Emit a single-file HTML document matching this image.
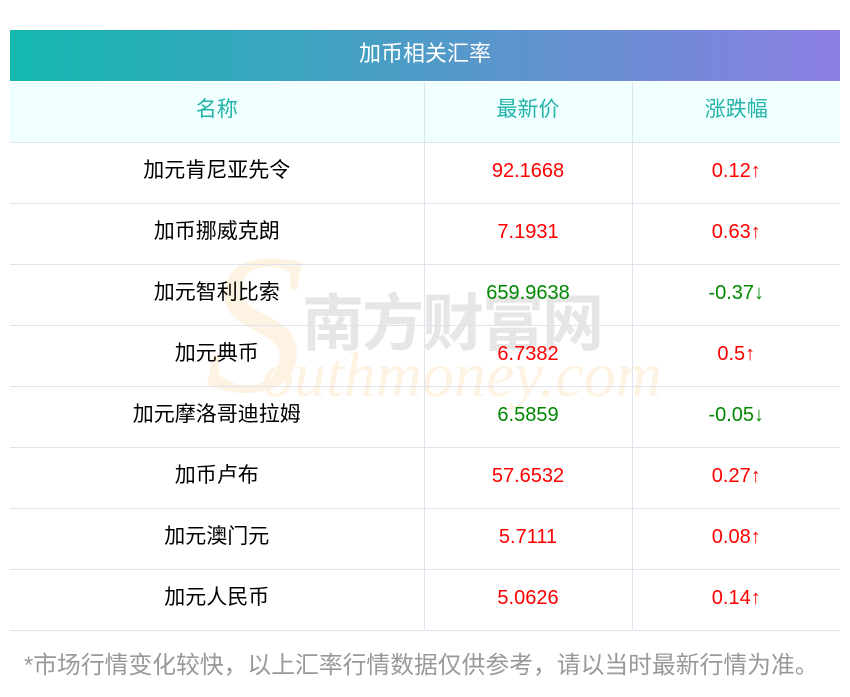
<!DOCTYPE html>
<html><head><meta charset="utf-8"><style>
body{margin:0;background:#fff;width:850px;height:697px;position:relative;overflow:hidden;font-family:"Liberation Sans","Noto Sans CJK SC",sans-serif}
.hd{position:absolute;left:10px;top:30px;width:830px;height:51px;background:linear-gradient(90deg,#13b8ae,#8c7ee2);color:#fff;font-size:22px;line-height:48px;text-align:center}
table{position:absolute;left:10px;top:82px;width:830px;border-collapse:collapse;table-layout:fixed}
td{border:1px solid #dfe3ee;height:52px;text-align:center;font-size:20px;padding:2px 0 6px 0}
td.c{font-size:21px;padding:0 0 8px 0}
tr td:first-child{border-left:none}tr td:last-child{border-right:none}
tr:first-child td{border-top:none;background:#f0ffff;color:#22b5a8;font-size:21px;padding:0 0 8px 0}
.r{color:#f00}.g{color:#080}
.foot{position:absolute;left:24px;top:651px;font-size:23.8px;color:#999;white-space:nowrap;line-height:30px}
.wm{position:absolute;pointer-events:none}
</style></head><body>
<div class="hd">加币相关汇率</div>
<div class="wm" style="left:205px;top:225px;font-family:'Liberation Serif',serif;font-style:italic;font-size:200px;color:#fef3e2;line-height:200px">S</div>
<div class="wm" style="left:302px;top:290px;font-size:62px;color:#e6e6e6;letter-spacing:-2px;font-weight:bold;line-height:70px">南方财富网</div>
<div class="wm" style="left:262px;top:340px;font-family:'Liberation Serif',serif;font-style:italic;font-size:64px;color:#fef3e2;line-height:70px">outhmoney.com</div>
<table>
<colgroup><col style="width:414px"><col style="width:208px"><col style="width:208px"></colgroup>
<tr><td>名称</td><td>最新价</td><td>涨跌幅</td></tr>
<tr><td class="c">加元肯尼亚先令</td><td class="r">92.1668</td><td class="r">0.12↑</td></tr>
<tr><td class="c">加币挪威克朗</td><td class="r">7.1931</td><td class="r">0.63↑</td></tr>
<tr><td class="c">加元智利比索</td><td class="g">659.9638</td><td class="g">-0.37↓</td></tr>
<tr><td class="c">加元典币</td><td class="r">6.7382</td><td class="r">0.5↑</td></tr>
<tr><td class="c">加元摩洛哥迪拉姆</td><td class="g">6.5859</td><td class="g">-0.05↓</td></tr>
<tr><td class="c">加币卢布</td><td class="r">57.6532</td><td class="r">0.27↑</td></tr>
<tr><td class="c">加元澳门元</td><td class="r">5.7111</td><td class="r">0.08↑</td></tr>
<tr><td class="c">加元人民币</td><td class="r">5.0626</td><td class="r">0.14↑</td></tr>
</table>
<div class="foot">*市场行情变化较快，以上汇率行情数据仅供参考，请以当时最新行情为准。</div>
</body></html>
